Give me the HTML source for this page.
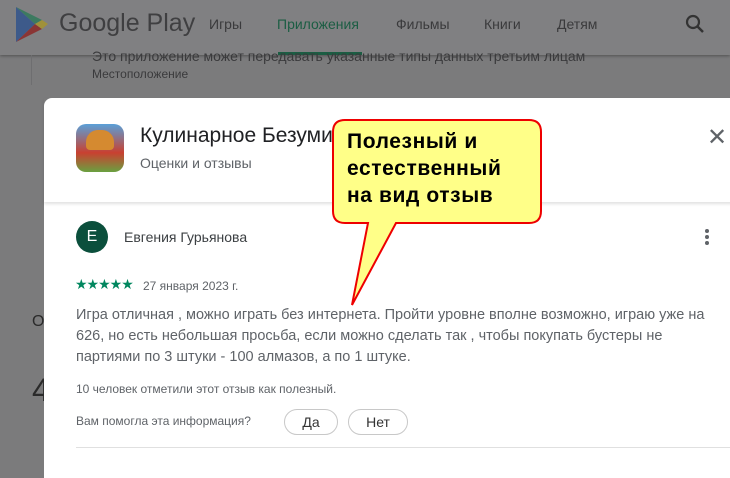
<!DOCTYPE html>
<html style="background:#7b7b7c"><head><meta charset="utf-8"><style>
body{margin:0;width:730px;height:468px;overflow:hidden;background:#7b7b7c;font-family:"Liberation Sans",Roboto,sans-serif;position:relative}
.hdr{position:absolute;left:0;top:0;width:730px;height:55px;box-shadow:0 1px 3px rgba(0,0,0,.35)}
.t{position:absolute;white-space:nowrap}
.modal{position:absolute;left:44px;top:98px;width:700px;height:380px;background:#fff;border-radius:8px 0 0 0}
.mh{position:absolute;left:0;top:0;width:700px;height:104px;box-shadow:0 2px 3px rgba(0,0,0,.12)}
.btn{position:absolute;top:409px;height:24px;border:1px solid #c8c8c8;border-radius:13px;font-size:14px;color:#333;text-align:center;line-height:24px;background:#fff}
</style></head><body>
<svg style="position:absolute;left:0;top:0" width="730" height="468"><rect width="730" height="468" fill="#7b7b7c"/><rect width="730" height="55" fill="#808082"/></svg>
<div class="hdr">
<svg style="position:absolute;left:15px;top:6px" width="34" height="37" viewBox="0 0 34 37"><path d="M1 1 L20 18 L1 36Z" fill="#3d5a8a"/><path d="M1 1 L27 14 L20 18Z" fill="#3c7a60"/><path d="M1 36 L27 23 L20 18Z" fill="#8a3535"/><path d="M27 14 L33 18 L27 23 L20 18Z" fill="#a0913a"/></svg>
<div class="t" style="left:59px;top:9px;font-size:25px;color:#3f3f41">Google Play</div>
<div class="t" style="left:209px;top:16px;font-size:14px;color:#3a3a3c">Игры</div>
<div class="t" style="left:277px;top:16px;font-size:14px;color:#1b5d43">Приложения</div>
<div style="position:absolute;left:278px;top:52px;width:84px;height:3px;background:#1b5d43"></div>
<div class="t" style="left:396px;top:16px;font-size:14px;color:#3a3a3c">Фильмы</div>
<div class="t" style="left:484px;top:16px;font-size:14px;color:#3a3a3c">Книги</div>
<div class="t" style="left:557px;top:16px;font-size:14px;color:#3a3a3c">Детям</div>
<svg style="position:absolute;left:685px;top:14px" width="20" height="20" viewBox="0 0 20 20"><circle cx="8" cy="8" r="6" fill="none" stroke="#333" stroke-width="2.2"/><path d="M12.5 12.5 L18 18" stroke="#333" stroke-width="2.5"/></svg>
</div>
<div style="position:absolute;left:31px;top:55px;width:1px;height:30px;background:#6e6e70"></div>
<div class="t" style="left:92px;top:48px;font-size:14px;color:#3a3a3c">Это приложение может передавать указанные типы данных третьим лицам</div>
<div class="t" style="left:92px;top:67px;font-size:12px;color:#3a3a3c">Местоположение</div>
<div class="t" style="left:32px;top:313px;font-size:16px;color:#2a2a2a">О</div>
<div class="t" style="left:32px;top:372px;font-size:32px;color:#2a2a2a">4</div>
<div class="modal">
<div class="mh"></div>
<div style="position:absolute;left:32px;top:26px;width:48px;height:48px;border-radius:10px;background:linear-gradient(#5aa0d8,#c94030 60%,#6aa040)"><div style="position:absolute;left:10px;top:6px;width:28px;height:20px;border-radius:12px 12px 4px 4px;background:#d58a30"></div></div>
<div class="t" style="left:96px;top:26px;font-size:21px;color:#202124">Кулинарное Безумие</div>
<div class="t" style="left:96px;top:57px;font-size:14px;color:#5f6368">Оценки и отзывы</div>
<div style="position:absolute;left:663px;top:28px;font-size:24px;color:#5f6368;line-height:1">✕</div>
<div style="position:absolute;left:32px;top:123px;width:32px;height:32px;border-radius:50%;background:#0b4f3c;color:#fff;text-align:center;line-height:32px;font-size:16px">Е</div>
<div class="t" style="left:80px;top:131px;font-size:14px;color:#3c4043">Евгения Гурьянова</div>
<div style="position:absolute;left:661px;top:131px;width:4px;height:4px;border-radius:2px;background:#5f6368;box-shadow:0 6px 0 #5f6368,0 12px 0 #5f6368"></div>
<div class="t" style="left:31px;top:178px;font-size:14px;color:#01875f;letter-spacing:-1px">★★★★★</div>
<div class="t" style="left:99px;top:181px;font-size:12px;color:#5f6368">27 января 2023 г.</div>
<div class="t" style="left:32px;top:207px;font-size:14.5px;line-height:21px;color:#5f6368">Игра отличная , можно играть без интернета. Пройти уровне вполне возможно, играю уже на<br>626, но есть небольшая просьба, если можно сделать так , чтобы покупать бустеры не<br>партиями по 3 штуки - 100 алмазов, а по 1 штуке.</div>
<div class="t" style="left:32px;top:284px;font-size:12px;color:#5f6368">10 человек отметили этот отзыв как полезный.</div>
<div class="t" style="left:32px;top:316px;font-size:12px;color:#5f6368">Вам помогла эта информация?</div>
<div style="position:absolute;left:32px;top:349px;width:660px;height:1px;background:#e0e0e0"></div>
</div>
<div class="btn" style="left:284px;width:52px">Да</div>
<div class="btn" style="left:348px;width:58px">Нет</div>
<svg style="position:absolute;left:330px;top:118px" width="215" height="192" viewBox="0 0 215 192"><path d="M15 2 H199 Q211 2 211 14 V93 Q211 105 199 105 H66 L22 187 L38 105 H15 Q3 105 3 93 V14 Q3 2 15 2Z" fill="#ffff88" stroke="#ee0000" stroke-width="2"/></svg>
<div class="t" style="left:347px;top:128px;font-size:21px;font-weight:bold;line-height:27px;letter-spacing:0.6px;color:#000">Полезный и<br>естественный<br>на вид отзыв</div>
</body></html>
